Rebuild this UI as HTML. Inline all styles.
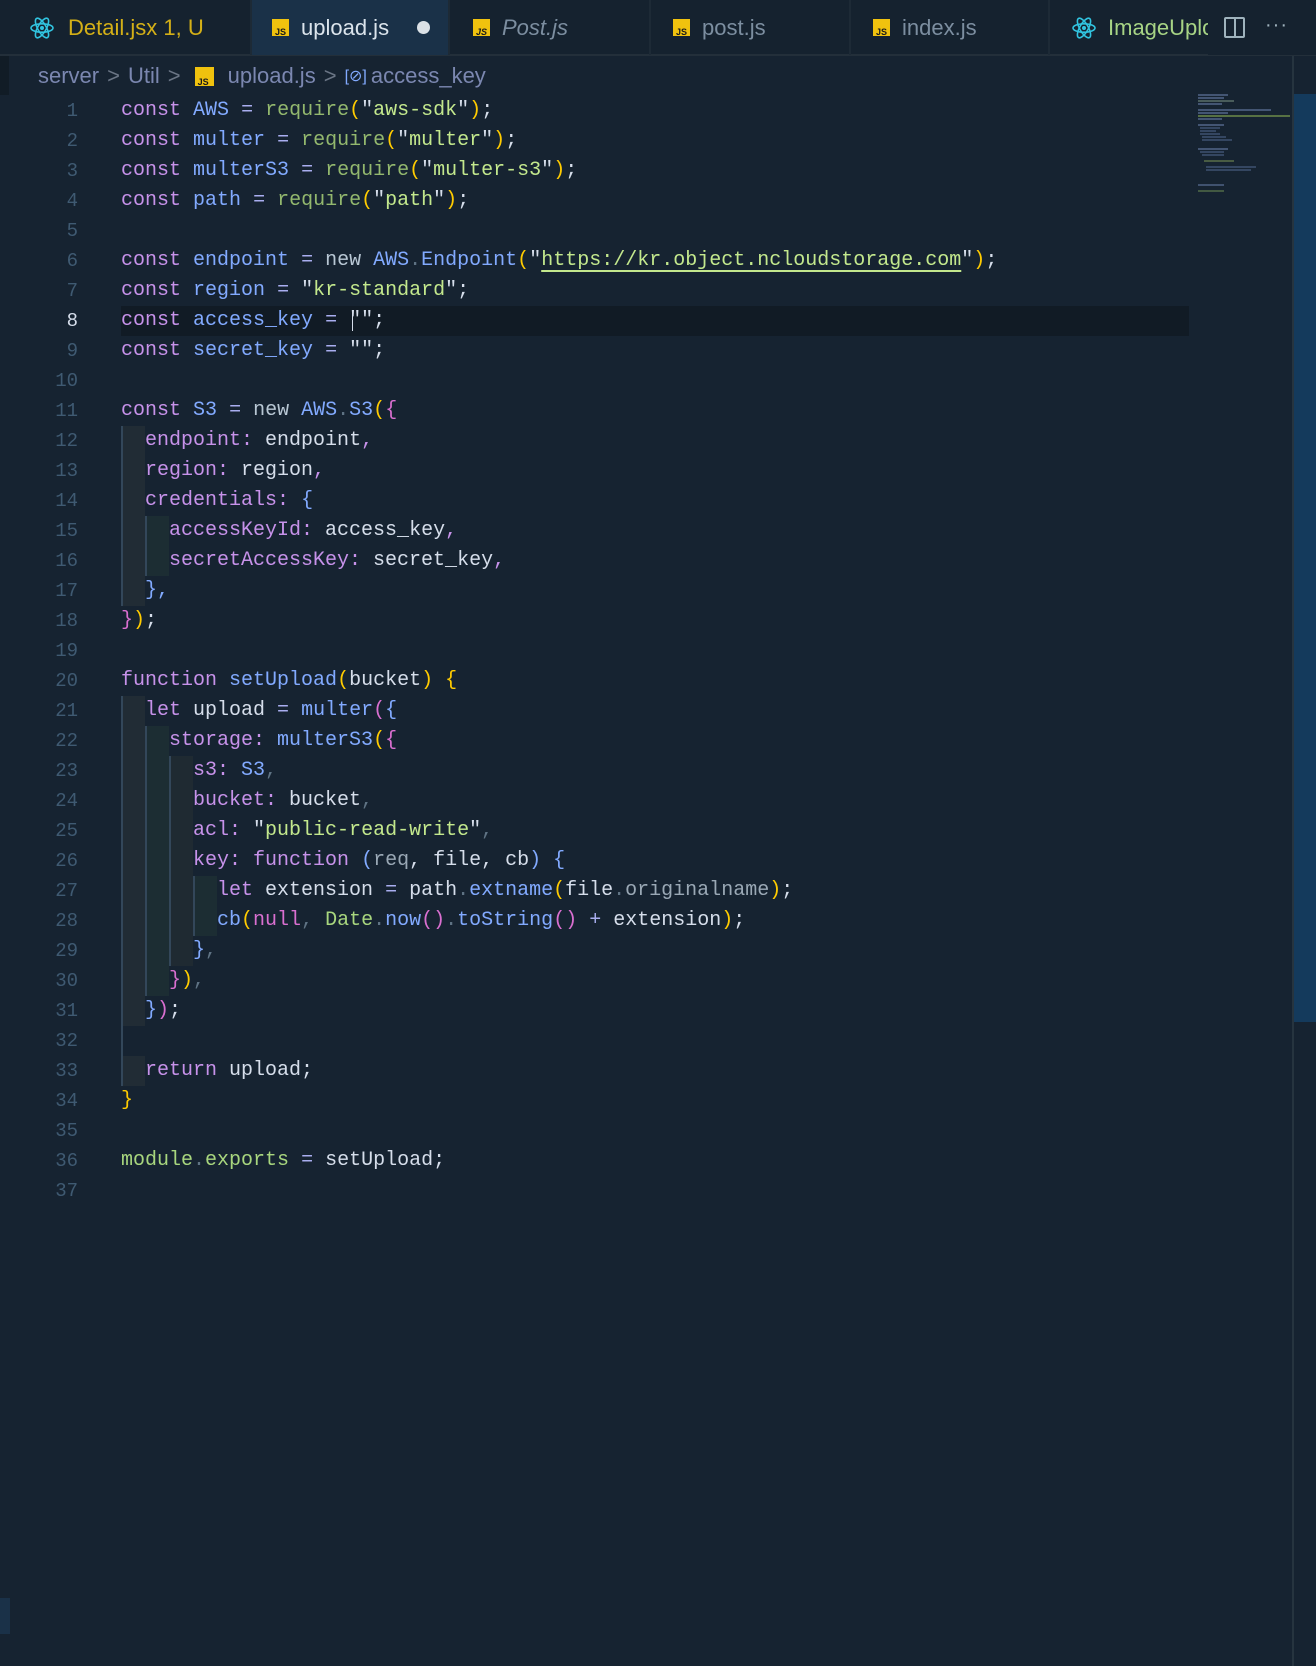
<!DOCTYPE html>
<html><head><meta charset="utf-8"><style>
*{margin:0;padding:0;box-sizing:border-box}
body{width:1316px;height:1666px;background:#162331;overflow:hidden;position:relative;font-family:"Liberation Sans",sans-serif}
.tabs{position:absolute;left:0;top:0;width:1316px;height:56px;background:#15222f;border-bottom:2px solid #232f3a}
.tab{position:absolute;top:0;height:55px;display:flex;align-items:center;font-size:22px;color:#7c8ea0;border-right:2px solid #1d2a36}
.tab .ic{margin-right:12px;flex-shrink:0}
.js{display:inline-block;width:17px;height:17px;background:#f0c20e;position:relative;flex-shrink:0}
.js:after{content:"JS";position:absolute;left:3px;bottom:-1px;font-size:9px;font-weight:bold;color:#1a1a1a;font-family:"Liberation Sans",sans-serif}
.code{position:absolute;left:0;top:2px;width:1316px;font-family:"Liberation Mono",monospace;font-size:20px}
.ln{position:absolute;left:0;width:78px;text-align:right;color:#3f5a72;font-family:"Liberation Mono",monospace;font-size:19px;height:30px;line-height:30px}
.l{position:absolute;left:121px;height:30px;line-height:30px;white-space:pre;color:#d6deeb}
.k{color:#c792ea}.b{color:#82aaff}.s{color:#c3e88d}.y{color:#ffcb00}.p{color:#d96fd0}.g{color:#5f7384}.o{color:#a9aef0}.m{color:#b8c7d4}.r{color:#9aa8b5}.lg{color:#a8d67e}.rq{color:#93b86e}
.ig{position:absolute;background:#212c35;border-left:2px solid #33475a}
.ig2{position:absolute;background:#1c2d33;border-left:2px solid #33475a}
.bc{position:absolute;left:38px;top:63px;font-size:22px;color:#7b87b0;display:flex;align-items:center;white-space:pre}
.ch{color:#6a7585;margin:0 8px}
.mm{position:absolute;height:2px}
</style></head><body>
<div style="position:absolute;left:0;top:0;width:9px;height:95px;background:#111c26"></div>
<div class="tabs">
 <div class="tab" style="left:14px;width:238px;color:#d4b017;padding-left:16px"><svg class="ic" width="24" height="24" viewBox="-12 -12 24 24" style="margin-right:14px"><g fill="none" stroke="#31c4e0" stroke-width="1.6"><ellipse rx="11" ry="4.2"/><ellipse rx="11" ry="4.2" transform="rotate(60)"/><ellipse rx="11" ry="4.2" transform="rotate(120)"/></g><circle r="2" fill="#31c4e0"/></svg>Detail.jsx 1, U</div>
 <div class="tab" style="left:252px;width:198px;background:#1a3148;color:#dbe4ec;padding-left:20px"><span class="js ic"></span>upload.js<span style="display:inline-block;width:13px;height:13px;border-radius:50%;background:#dbe1e6;margin-left:28px"></span></div>
 <div class="tab" style="left:451px;width:200px;font-style:italic;padding-left:22px"><span class="js ic"></span>Post.js</div>
 <div class="tab" style="left:651px;width:200px;padding-left:22px"><span class="js ic"></span>post.js</div>
 <div class="tab" style="left:851px;width:199px;padding-left:22px"><span class="js ic"></span>index.js</div>
 <div class="tab" style="left:1050px;width:162px;color:#a7d485;padding-left:22px;overflow:hidden;white-space:nowrap;border:none"><svg class="ic" width="24" height="24" viewBox="-12 -12 24 24"><g fill="none" stroke="#31c4e0" stroke-width="1.6"><ellipse rx="11" ry="4.2"/><ellipse rx="11" ry="4.2" transform="rotate(60)"/><ellipse rx="11" ry="4.2" transform="rotate(120)"/></g><circle r="2" fill="#31c4e0"/></svg>ImageUpload</div>
 <div style="position:absolute;left:1208px;top:0;width:108px;height:55px;background:#15222f"></div>
 <div style="position:absolute;left:1224px;top:17px;width:21px;height:21px;border:2px solid #9fb3bd;border-radius:2px"><div style="position:absolute;left:8px;top:0;width:2px;height:17px;background:#9fb3bd"></div></div>
 <div style="position:absolute;left:1265px;top:14px;color:#9fb3bd;font-size:20px;letter-spacing:1px">···</div>
</div>
<div class="bc">server<span class="ch">&gt;</span>Util<span class="ch">&gt;</span><span class="js" style="margin:0 14px 0 6px;width:19px;height:19px"></span>upload.js<span class="ch">&gt;</span><span style="color:#82aaff;font-size:16px;margin-right:4px">[⊘]</span>access_key</div>
<div style="position:absolute;left:121px;top:306px;width:1068px;height:30px;background:#111b25"></div>
<!-- indent guides -->
<div class="ig" style="left:121px;top:426px;width:24px;height:180px"></div>
<div class="ig2" style="left:145px;top:516px;width:24px;height:60px"></div>
<div class="ig" style="left:121px;top:696px;width:24px;height:330px"></div>
<div class="ig2" style="left:145px;top:726px;width:24px;height:270px"></div>
<div class="ig" style="left:169px;top:756px;width:24px;height:210px;background:#1f2a32"></div>
<div class="ig2" style="left:193px;top:876px;width:24px;height:60px"></div>
<div style="position:absolute;left:121px;top:1026px;width:2px;height:30px;background:#33475a"></div>
<div class="ig" style="left:121px;top:1056px;width:24px;height:30px"></div>
<div class="code">
<div class="ln" style="top:94px">1</div><div class="l" style="top:94px"><span class="k">const</span> <span class="b">AWS</span> <span class="o">=</span> <span class="rq">require</span><span class="y">(</span>"<span class="s">aws-sdk</span>"<span class="y">)</span>;</div>
<div class="ln" style="top:124px">2</div><div class="l" style="top:124px"><span class="k">const</span> <span class="b">multer</span> <span class="o">=</span> <span class="rq">require</span><span class="y">(</span>"<span class="s">multer</span>"<span class="y">)</span>;</div>
<div class="ln" style="top:154px">3</div><div class="l" style="top:154px"><span class="k">const</span> <span class="b">multerS3</span> <span class="o">=</span> <span class="rq">require</span><span class="y">(</span>"<span class="s">multer-s3</span>"<span class="y">)</span>;</div>
<div class="ln" style="top:184px">4</div><div class="l" style="top:184px"><span class="k">const</span> <span class="b">path</span> <span class="o">=</span> <span class="rq">require</span><span class="y">(</span>"<span class="s">path</span>"<span class="y">)</span>;</div>
<div class="ln" style="top:214px">5</div>
<div class="ln" style="top:244px">6</div><div class="l" style="top:244px"><span class="k">const</span> <span class="b">endpoint</span> <span class="o">=</span> <span class="m">new</span> <span class="b">AWS</span><span class="g">.</span><span class="b">Endpoint</span><span class="y">(</span>"<span class="s" style="text-decoration:underline;text-underline-offset:5px">https://kr.object.ncloudstorage.com</span>"<span class="y">)</span>;</div>
<div class="ln" style="top:274px">7</div><div class="l" style="top:274px"><span class="k">const</span> <span class="b">region</span> <span class="o">=</span> "<span class="s">kr-standard</span>";</div>
<div class="ln" style="top:304px;color:#d6deeb">8</div><div class="l" style="top:304px"><span class="k">const</span> <span class="b">access_key</span> <span class="o">=</span> ""<span>;</span></div>
<div class="ln" style="top:334px">9</div><div class="l" style="top:334px"><span class="k">const</span> <span class="b">secret_key</span> <span class="o">=</span> "";</div>
<div class="ln" style="top:364px">10</div>
<div class="ln" style="top:394px">11</div><div class="l" style="top:394px"><span class="k">const</span> <span class="b">S3</span> <span class="o">=</span> <span class="m">new</span> <span class="b">AWS</span><span class="g">.</span><span class="b">S3</span><span class="y">(</span><span class="p">{</span></div>
<div class="ln" style="top:424px">12</div><div class="l" style="top:424px">  <span class="k">endpoint:</span> endpoint<span class="k">,</span></div>
<div class="ln" style="top:454px">13</div><div class="l" style="top:454px">  <span class="k">region:</span> region<span class="k">,</span></div>
<div class="ln" style="top:484px">14</div><div class="l" style="top:484px">  <span class="k">credentials:</span> <span class="b">{</span></div>
<div class="ln" style="top:514px">15</div><div class="l" style="top:514px">    <span class="k">accessKeyId:</span> access_key<span class="k">,</span></div>
<div class="ln" style="top:544px">16</div><div class="l" style="top:544px">    <span class="k">secretAccessKey:</span> secret_key<span class="k">,</span></div>
<div class="ln" style="top:574px">17</div><div class="l" style="top:574px">  <span class="b">},</span></div>
<div class="ln" style="top:604px">18</div><div class="l" style="top:604px"><span class="p">}</span><span class="y">)</span>;</div>
<div class="ln" style="top:634px">19</div>
<div class="ln" style="top:664px">20</div><div class="l" style="top:664px"><span class="k">function</span> <span class="b">setUpload</span><span class="y">(</span>bucket<span class="y">)</span> <span class="y">{</span></div>
<div class="ln" style="top:694px">21</div><div class="l" style="top:694px">  <span class="k">let</span> upload <span class="o">=</span> <span class="b">multer</span><span class="p">(</span><span class="b">{</span></div>
<div class="ln" style="top:724px">22</div><div class="l" style="top:724px">    <span class="k">storage:</span> <span class="b">multerS3</span><span class="y">(</span><span class="p">{</span></div>
<div class="ln" style="top:754px">23</div><div class="l" style="top:754px">      <span class="k">s3:</span> <span class="b">S3</span><span class="g">,</span></div>
<div class="ln" style="top:784px">24</div><div class="l" style="top:784px">      <span class="k">bucket:</span> bucket<span class="g">,</span></div>
<div class="ln" style="top:814px">25</div><div class="l" style="top:814px">      <span class="k">acl:</span> "<span class="s">public-read-write</span>"<span class="g">,</span></div>
<div class="ln" style="top:844px">26</div><div class="l" style="top:844px">      <span class="k">key:</span> <span class="k">function</span> <span class="b">(</span><span class="r">req</span>, file, cb<span class="b">)</span> <span class="b">{</span></div>
<div class="ln" style="top:874px">27</div><div class="l" style="top:874px">        <span class="k">let</span> extension <span class="o">=</span> path<span class="g">.</span><span class="b">extname</span><span class="y">(</span>file<span class="g">.</span><span class="r">originalname</span><span class="y">)</span>;</div>
<div class="ln" style="top:904px">28</div><div class="l" style="top:904px">        <span class="b">cb</span><span class="y">(</span><span class="p">null</span><span class="g">,</span> <span class="lg">Date</span><span class="g">.</span><span class="b">now</span><span class="p">()</span><span class="g">.</span><span class="b">toString</span><span class="p">()</span> <span class="o">+</span> extension<span class="y">)</span>;</div>
<div class="ln" style="top:934px">29</div><div class="l" style="top:934px">      <span class="b">}</span><span class="g">,</span></div>
<div class="ln" style="top:964px">30</div><div class="l" style="top:964px">    <span class="p">}</span><span class="y">)</span><span class="g">,</span></div>
<div class="ln" style="top:994px">31</div><div class="l" style="top:994px">  <span class="b">}</span><span class="p">)</span>;</div>
<div class="ln" style="top:1024px">32</div>
<div class="ln" style="top:1054px">33</div><div class="l" style="top:1054px">  <span class="k">return</span> upload;</div>
<div class="ln" style="top:1084px">34</div><div class="l" style="top:1084px"><span class="y">}</span></div>
<div class="ln" style="top:1114px">35</div>
<div class="ln" style="top:1144px">36</div><div class="l" style="top:1144px"><span class="lg">module</span><span class="g">.</span><span class="lg">exports</span> <span class="o">=</span> setUpload;</div>
<div class="ln" style="top:1174px">37</div>
</div>
<div style="position:absolute;left:352px;top:311px;width:1px;height:20px;background:#d6deeb"></div>
<!-- minimap -->
<div style="position:absolute;left:1198px;top:94px;width:92px;height:80px;opacity:.75">
 <div class="mm" style="left:0;top:0;width:30px;background:#52668a"></div>
 <div class="mm" style="left:0;top:3px;width:26px;background:#52668a"></div>
 <div class="mm" style="left:0;top:6px;width:36px;background:#5a6f6a"></div>
 <div class="mm" style="left:0;top:9px;width:24px;background:#52668a"></div>
 <div class="mm" style="left:0;top:15px;width:73px;background:#52668a"></div>
 <div class="mm" style="left:0;top:18px;width:30px;background:#52668a"></div>
 <div class="mm" style="left:0;top:21px;width:92px;background:#6d8c4a"></div>
 <div class="mm" style="left:0;top:24px;width:24px;background:#52668a"></div>
 <div class="mm" style="left:0;top:30px;width:26px;background:#52668a"></div>
 <div class="mm" style="left:2px;top:33px;width:20px;background:#3e5272"></div>
 <div class="mm" style="left:2px;top:36px;width:16px;background:#3e5272"></div>
 <div class="mm" style="left:2px;top:39px;width:20px;background:#3e5272"></div>
 <div class="mm" style="left:4px;top:42px;width:24px;background:#3e5272"></div>
 <div class="mm" style="left:4px;top:45px;width:30px;background:#3e5272"></div>
 <div class="mm" style="left:0;top:54px;width:30px;background:#52668a"></div>
 <div class="mm" style="left:2px;top:57px;width:24px;background:#3e5272"></div>
 <div class="mm" style="left:4px;top:60px;width:22px;background:#3e5272"></div>
 <div class="mm" style="left:6px;top:66px;width:30px;background:#5a6f4a"></div>
 <div class="mm" style="left:8px;top:72px;width:50px;background:#3e5272"></div>
 <div class="mm" style="left:8px;top:75px;width:45px;background:#3e5272"></div>
</div>
<div style="position:absolute;left:1198px;top:184px;width:26px;height:2px;background:#52668a;opacity:.7"></div>
<div style="position:absolute;left:1198px;top:190px;width:26px;height:2px;background:#56714a;opacity:.7"></div>
<div style="position:absolute;left:1292px;top:56px;width:2px;height:1610px;background:#26343f"></div>
<div style="position:absolute;left:1294px;top:94px;width:22px;height:928px;background:#143a5c"></div>
<div style="position:absolute;left:0;top:1598px;width:10px;height:36px;background:#1a3148"></div>
</body></html>
